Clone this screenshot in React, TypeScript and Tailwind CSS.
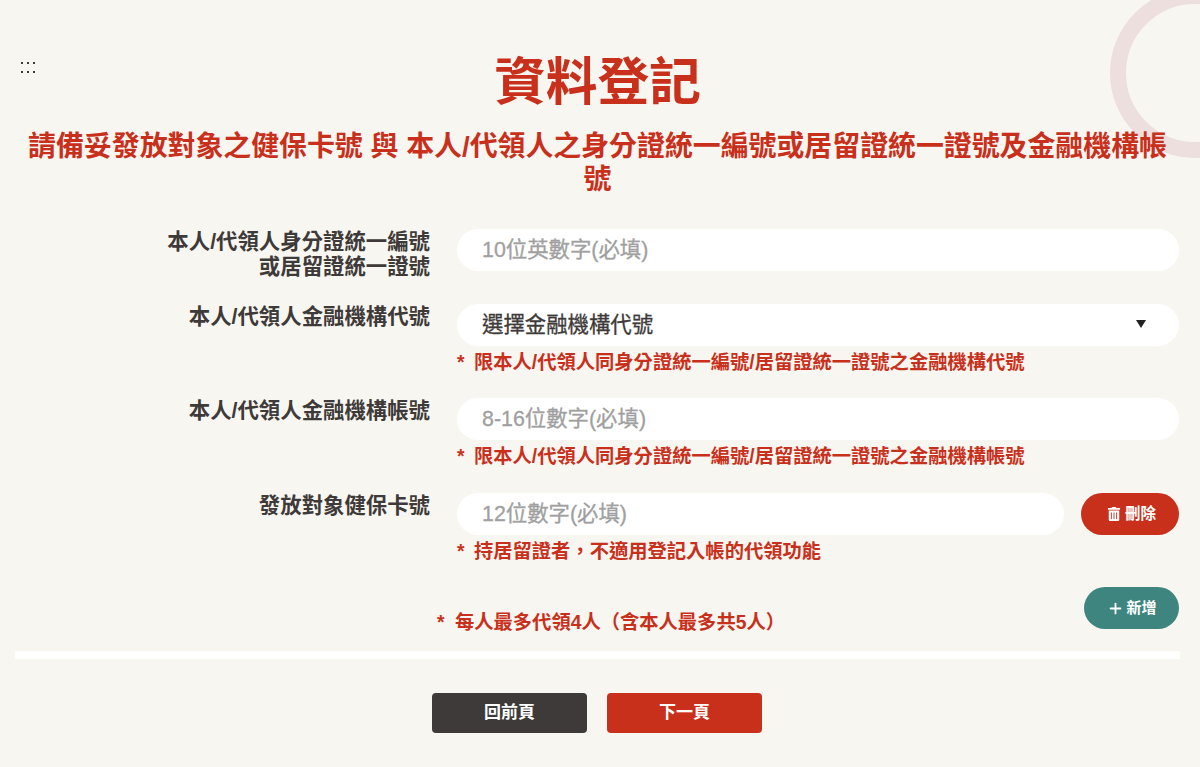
import React from 'react';
import { Plus } from 'lucide-react';
import { FaTrashAlt } from 'react-icons/fa';

const font = 'font-["Liberation_Sans","Noto_Sans_CJK_TC",sans-serif]';

const Note = ({ children }: { children: React.ReactNode }) => (
  <p className="mt-[5px] h-[23px] text-[19.3px] leading-[23px] font-bold text-[#c9301c] whitespace-nowrap">
    <span className="inline-block w-[17px]">*</span>
    {children}
  </p>
);

const Field = ({ placeholder }: { placeholder: string }) => (
  <input
    placeholder={placeholder}
    className="w-full h-[42px] rounded-full bg-white px-[25px] text-[21.4px] [-webkit-text-stroke:0.3px] text-[#3e3a39] outline-none placeholder:text-[#a0a0a0]"
  />
);

const Row = ({ label, children }: { label: React.ReactNode; children: React.ReactNode }) => (
  <div className="flex">
    <label className="w-[415px] shrink-0 pt-px text-right text-[21.4px] leading-[25px] font-bold text-[#3e3a39]">{label}</label>
    <div className="ml-[27px] flex-1 min-w-0">{children}</div>
  </div>
);

export default function App() {
  return (
    <div lang="zh-TW" className={`relative w-full h-[767px] overflow-hidden bg-[#f8f6f0] [text-spacing-trim:space-all] ${font}`}>
      <div className="absolute left-[1110px] top-[-12px] w-[170px] h-[170px] rounded-full border-[16px] border-[#ecdfdd]" />
      <div className="absolute left-[21px] top-[62px] grid grid-cols-3 gap-x-[4px] gap-y-[7px]">
        {[0, 1, 2, 3, 4, 5].map((i) => (
          <span key={i} className="w-[2px] h-[2px] bg-[#3e3a39]" />
        ))}
      </div>

      <div className="relative pl-[15px] pr-[20px]">
        <h1 className="pt-[50px] text-center text-[51.7px] leading-[64px] font-bold text-[#c9301c]">資料登記</h1>
        <h2 className="mt-[16px] text-center text-[27.9px] leading-[33px] font-bold text-[#c9301c]">
          請備妥發放對象之健保卡號 與 本人/代領人之身分證統一編號或居留證統一證號及金融機構帳號
        </h2>

        <div className="mt-[33px] pr-[1px]">
          <Row label={<>本人/代領人身分證統一編號<br />或居留證統一證號</>}>
            <Field placeholder="10位英數字(必填)" />
          </Row>
          <div className="mt-[24px]">
            <Row label="本人/代領人金融機構代號">
              <div className="relative flex items-center h-[42px] rounded-full bg-white px-[25px] text-[21.4px] [-webkit-text-stroke:0.3px] text-[#3e3a39]">
                選擇金融機構代號
                <span className="absolute right-[33px] top-[16px] w-0 h-0 border-x-[5.5px] border-x-transparent border-t-[8px] border-t-[#222]" />
              </div>
              <Note>限本人/代領人同身分證統一編號/居留證統一證號之金融機構代號</Note>
            </Row>
          </div>
          <div className="mt-[24px]">
            <Row label="本人/代領人金融機構帳號">
              <Field placeholder="8-16位數字(必填)" />
              <Note>限本人/代領人同身分證統一編號/居留證統一證號之金融機構帳號</Note>
            </Row>
          </div>
          <div className="mt-[25px]">
            <Row label="發放對象健保卡號">
              <div className="flex items-center gap-[17px]">
                <Field placeholder="12位數字(必填)" />
                <button className="shrink-0 flex items-center justify-center gap-[4px] pl-[3px] w-[98px] h-[42px] rounded-full bg-[#c9301c] text-[15.5px] font-bold text-white">
                  <FaTrashAlt size={14} />
                  刪除
                </button>
              </div>
              <Note>持居留證者，不適用登記入帳的代領功能</Note>
            </Row>
          </div>
        </div>

        <div className="mt-[24px] flex pr-[1px]">
          <p className="ml-[422px] mt-[24px] text-[19.3px] leading-[23px] font-bold text-[#c9301c] whitespace-nowrap">
            <span className="inline-block w-[18px]">*</span>每人最多代領4人（含本人最多共5人）
          </p>
          <button className="ml-auto flex items-center justify-center gap-[2px] pl-[1px] w-[95px] h-[42px] rounded-full bg-[#3e8580] text-[15px] font-bold text-white">
            <Plus size={17} strokeWidth={2.5} />
            新增
          </button>
        </div>

        <div className="mt-[17px] h-[8px] bg-white" />

        <div className="mt-[34px] pr-[1px] flex justify-center gap-[20px]">
          <button className="w-[155px] h-[40px] rounded-[4px] bg-[#3e3a39] text-[17px] font-bold text-white">回前頁</button>
          <button className="w-[155px] h-[40px] rounded-[4px] bg-[#c9301c] text-[17px] font-bold text-white">下一頁</button>
        </div>
      </div>
    </div>
  );
}
